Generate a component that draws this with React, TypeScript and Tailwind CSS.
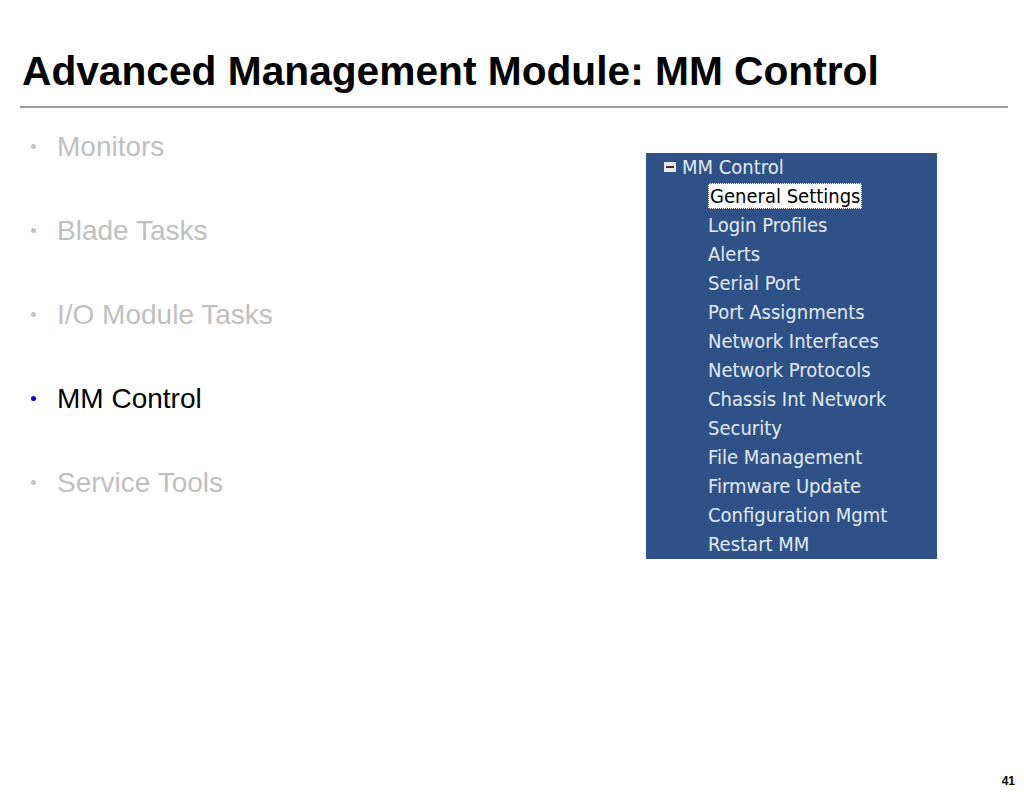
export default function App() {
  const bullets = [
    { label: "Monitors", active: false },
    { label: "Blade Tasks", active: false },
    { label: "I/O Module Tasks", active: false },
    { label: "MM Control", active: true },
    { label: "Service Tools", active: false },
  ];

  const items = [
    "General Settings",
    "Login Profiles",
    "Alerts",
    "Serial Port",
    "Port Assignments",
    "Network Interfaces",
    "Network Protocols",
    "Chassis Int Network",
    "Security",
    "File Management",
    "Firmware Update",
    "Configuration Mgmt",
    "Restart MM",
  ];

  return (
    <div className="relative w-[1024px] h-[792px] bg-white overflow-hidden font-['Liberation_Sans',Arial,sans-serif]">
      {/* title */}
      <div className="pt-[51px] px-[20px]">
        <h1 className="pl-[2px] text-[40.7px] leading-none font-bold text-black">
          Advanced Management Module: MM Control
        </h1>
        <div className="mt-[14px] h-[2px] w-[988px] bg-[#9a9a9a]" />
      </div>

      <div className="flex">
        {/* bullet list */}
        <ul className="flex flex-col gap-[56px] pt-[25px] pl-[30px] w-[646px]">
          {bullets.map((b) => (
            <li key={b.label} className="flex items-center text-[28px] leading-none">
              <span
                className={`w-[5px] h-[5px] rounded-full ml-[1px] mr-[21px] ${
                  b.active ? "bg-[#0000e0]" : "bg-[#c4c4c4]"
                }`}
              />
              <span className={b.active ? "text-black" : "text-[#c0c0c0]"}>{b.label}</span>
            </li>
          ))}
        </ul>

        {/* MM Control tree panel */}
        <div className="mt-[45px] w-[291px] bg-[#2e5287] text-[#e4eaf3] text-[20px] font-['DejaVu_Sans_Condensed','DejaVu_Sans',sans-serif]">
          <div className="flex items-center h-[29px] pl-[18px]">
            <span className="flex items-center justify-center w-[12px] h-[10px] bg-[#e8e8e8] mr-[6px]">
              <span className="w-[8px] h-[2px] bg-[#333]" />
            </span>
            <span>MM Control</span>
          </div>
          {items.map((it, i) => (
            <div key={it} className="flex items-center h-[29px] pl-[62px]">
              {i === 0 ? (
                <span className="bg-white text-black border border-dotted border-[#555] px-[1px] leading-[24px]">
                  {it}
                </span>
              ) : (
                <span>{it}</span>
              )}
            </div>
          ))}
        </div>
      </div>

      <div className="absolute right-[9px] bottom-[2px] text-[12px] font-bold text-black">41</div>
    </div>
  );
}
